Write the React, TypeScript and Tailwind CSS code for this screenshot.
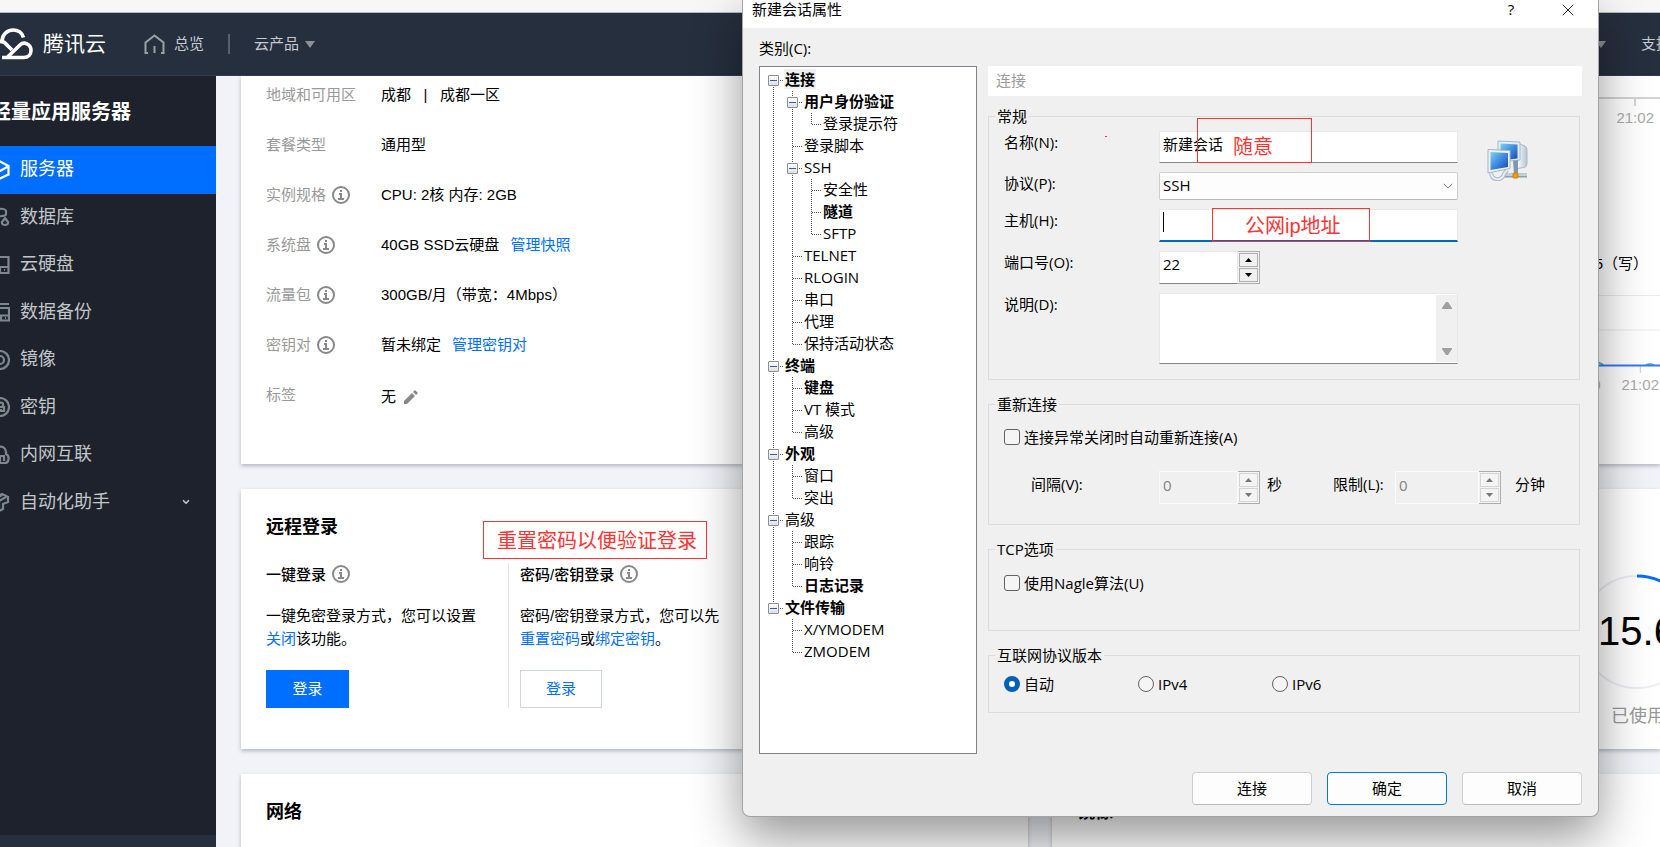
import type { ReactNode } from "react";
import { ChevronDown, X } from "lucide-react";

type TreeNode = { name: string; bold?: boolean; children?: TreeNode[] };

const categories: TreeNode[] = [
  {
    name: "连接",
    bold: true,
    children: [
      { name: "用户身份验证", bold: true, children: [{ name: "登录提示符" }] },
      { name: "登录脚本" },
      { name: "SSH", children: [{ name: "安全性" }, { name: "隧道", bold: true }, { name: "SFTP" }] },
      { name: "TELNET" },
      { name: "RLOGIN" },
      { name: "串口" },
      { name: "代理" },
      { name: "保持活动状态" },
    ],
  },
  { name: "终端", bold: true, children: [{ name: "键盘", bold: true }, { name: "VT 模式" }, { name: "高级" }] },
  { name: "外观", bold: true, children: [{ name: "窗口" }, { name: "突出" }] },
  { name: "高级", children: [{ name: "跟踪" }, { name: "响铃" }, { name: "日志记录", bold: true }] },
  { name: "文件传输", bold: true, children: [{ name: "X/YMODEM" }, { name: "ZMODEM" }] },
];

const navItems: { name: string; icon: ReactNode; active?: boolean; expandable?: boolean }[] = [
  { name: "服务器", active: true, icon: <path d="M10 1.5 18.5 6v8.500L10 18.500 1.500 14V6zM2 6.500l8 4.500 8-4.500" /> },
  { name: "数据库", icon: <path d="M2 4c0-3 14-3 14 0v3c0 3-14 3-14 0zm0 5c0 2 4 2.500 8 2M2 4v11c0 2 4 2.500 6 2.500M15 11l3 4c1 4-7 4-6 0z" /> },
  { name: "云硬盘", icon: <path d="M2 2h16.500v16H2zM2 12h16.500M10 12v6M14 15h1" /> },
  { name: "数据备份", icon: <path d="M4 2h15M2 6h17v12.500H2zM2 13.500h17M11 14v4M15 16h1" /> },
  { name: "镜像", icon: <><circle cx="10" cy="10" r="9" /><circle cx="10" cy="10" r="4" /></> },
  { name: "密钥", icon: <><circle cx="10" cy="10" r="9" /><path d="M9 14h5v-4h-5M13 10V7c0-2-4-2-4 0M11 12v1" /></> },
  { name: "内网互联", icon: <path d="M6 18c-6 0-6-8-1-8C4-1 17-1 16 9c4 2 3 9-1 9h-5v-8M10 11h4v5" /> },
  { name: "自动化助手", expandable: true, icon: <path d="m4 6 8-4 6 3v5l-5 2v5l-4 2V9zM9 9l7-4M12 3 5 7" /> },
];

function InfoIcon() {
  return (
    <svg className="ml-[6px] size-[18px] shrink-0" viewBox="0 0 18 18" fill="none" stroke="#888" strokeWidth="2">
      <circle cx="9" cy="9" r="8" />
      <path d="M9 4v2M7 8h2v5M6 13h6" />
    </svg>
  );
}

function CloudLogo() {
  return (
    <svg className="h-[32px] w-[38px]" viewBox="0 0 38 32" fill="none" stroke="#fff" strokeWidth="3.600">
      <path d="M2 14c3-1 7-1 10 3l5 5" />
      <path d="M7 13c0-6 5-11 11-11 5 0 9 2.500 10.500 7.500" />
      <path d="M12 29.500 25 17c4-4 11-1 11 5.500 0 4-3 7-7 7H7" />
    </svg>
  );
}

function TopBar() {
  return (
    <header className="flex h-[63px] shrink-0 items-center overflow-hidden whitespace-nowrap border-b border-[#323c54] bg-[#262f3e] text-[15px] text-[#c5c9d1]">
      <a href="#home" className="-ml-[5px] flex items-center gap-[10px] text-[21px] text-white">
        <CloudLogo />
        腾讯云
      </a>
      <a href="#overview" className="ml-[38px] flex items-center gap-[9px]">
        <svg className="h-[20px] w-[21px]" viewBox="0 0 21 20" fill="none" stroke="#98a3a8" strokeWidth="2">
          <path d="M4 19H1.500V8.500l9-7 9 7V19H17M10.500 12v7" />
        </svg>
        总览
      </a>
      <span className="ml-6 h-5 w-[2px] bg-[#59606b]" />
      <button className="ml-6 flex items-center gap-[6px]">
        云产品
        <Caret />
      </button>
      <span className="flex-1" />
      <Caret />
      <a href="#support" className="ml-[35px] w-[19px]">支持</a>
    </header>
  );
}

function Caret() {
  return (
    <svg className="h-[7px] w-[10px]" viewBox="0 0 10 7" fill="#8d9095">
      <path d="M0 0h10L5 7z" />
    </svg>
  );
}

function Sidebar() {
  return (
    <nav className="flex w-[216px] shrink-0 flex-col bg-[#1e222d]">
      <h2 className="-ml-[9px] flex h-[70px] items-center pt-[2px] text-[20px] font-bold text-white">轻量应用服务器</h2>
      <ul className="flex h-[380px] flex-col text-[18px] text-[#c1c6c8]">
        {navItems.map((item) => (
          <li key={item.name} className="flex flex-1">
            <a
              href={`#${item.name}`}
              className={`flex flex-1 items-center pr-[25px] ${item.active ? "bg-[#006eff] text-white" : ""}`}
            >
              <svg
                className={`-ml-[10px] mr-[10px] size-5 ${item.active ? "text-white" : "text-[#7c878e]"}`}
                viewBox="0 0 20 20"
                fill="none"
                stroke="currentColor"
                strokeWidth="2.200"
              >
                {item.icon}
              </svg>
              {item.name}
              {item.expandable && <ChevronDown className="ml-auto size-[10px]" strokeWidth={4} />}
            </a>
          </li>
        ))}
      </ul>
      <div className="mt-auto h-3 bg-[#262f3e]" />
    </nav>
  );
}

function Card({ className = "", children }: { className?: string; children?: ReactNode }) {
  return <section className={`bg-white shadow-[0_2px_4px_rgba(54,58,80,0.32)] ${className}`}>{children}</section>;
}

function SpecRow({ label, info, children }: { label: string; info?: boolean; children: ReactNode }) {
  return (
    <div className="flex h-5 items-center">
      <dt className="flex w-[115px] items-center text-[#999]">
        {label}
        {info && <InfoIcon />}
      </dt>
      <dd className="flex items-center gap-[11px] whitespace-pre">{children}</dd>
    </div>
  );
}

function Link({ children }: { children: string }) {
  return <a href={`#${children}`} className="text-[#006eff]">{children}</a>;
}

function SpecCard() {
  return (
    <Card className="pl-[25px] pt-[9px] pb-[59px]">
      <dl className="flex flex-col gap-[30px]">
        <SpecRow label="地域和可用区">成都   |   成都一区</SpecRow>
        <SpecRow label="套餐类型">通用型</SpecRow>
        <SpecRow label="实例规格" info>CPU: 2核 内存: 2GB</SpecRow>
        <SpecRow label="系统盘" info>40GB SSD云硬盘<Link>管理快照</Link></SpecRow>
        <SpecRow label="流量包" info>300GB/月（带宽：4Mbps）</SpecRow>
        <SpecRow label="密钥对" info>暂未绑定<Link>管理密钥对</Link></SpecRow>
        <SpecRow label="标签">
          <span className="flex items-center gap-2 pt-1">
            无
            <svg className="size-[14px]" viewBox="0 0 14 14" fill="#888">
              <path d="M0 14v-3l8-8 3 3-8 8zM9 2l2-2 3 3-2 2z" />
            </svg>
          </span>
        </SpecRow>
      </dl>
    </Card>
  );
}

function LoginCard() {
  return (
    <Card className="px-[25px] pt-[25px] pb-[41px]">
      <h3 className="text-[18px] leading-[26px] font-bold">远程登录</h3>
      <div className="mt-[23px] flex leading-[23px]">
        <div className="w-[243px] border-r border-[#e5e7ed] pr-[30px]">
          <h4 className="flex h-[22px] items-center font-medium">一键登录<InfoIcon /></h4>
          <p className="mt-[19px]">一键免密登录方式，您可以设置<Link>关闭</Link>该功能。</p>
          <button className="mt-5 h-[38px] w-[83px] bg-[#006eff] pb-[2px] text-white">登录</button>
        </div>
        <div className="w-[215px] pl-[11px]">
          <h4 className="flex h-[22px] items-center font-medium">密码/密钥登录<InfoIcon /></h4>
          <p className="mt-[19px]">密码/密钥登录方式，您可以先<Link>重置密码</Link>或<Link>绑定密钥</Link>。</p>
          <button className="mt-5 h-[38px] w-[82px] border border-[#cfd5de] pb-[2px] text-[#006eff]">登录</button>
        </div>
      </div>
    </Card>
  );
}

function MonitorCard() {
  return (
    <Card className="flex flex-col items-end overflow-hidden pt-[21px] text-[15px]">
      <svg className="h-[9px] w-full" preserveAspectRatio="xMaxYMin slice" viewBox="0 0 600 9" shapeRendering="crispEdges">
        <path d="M0 1h600M575.500 1v8" stroke="#d4d4d4" strokeWidth="2" />
      </svg>
      <span className="mr-[6px] mt-[2px] leading-5 text-[#aaa]">21:02</span>
      <span className="mr-[12px] mt-[126px] leading-5">0.05（写）</span>
      <svg className="mt-5 h-[79px] w-full" preserveAspectRatio="xMaxYMin slice" viewBox="0 0 600 79" fill="none">
        <path d="M0 1.500h600M0 35.500h600" stroke="#eaeaea" />
        <path d="M580.500 71v8" stroke="#ccc" />
        <path d="M0 70h532l6-3 6 3M586 70l4-1 4 1" stroke="#4fc08d" strokeWidth="2" />
        <path d="M0 70.500h600" stroke="#3377ff" strokeWidth="2" />
      </svg>
      <span className="mr-[1px] mt-[2px] whitespace-pre leading-5 text-[#aaa]">21:00     21:02</span>
    </Card>
  );
}

function TrafficCard() {
  return (
    <Card className="flex flex-col items-end overflow-hidden pt-[84px]">
      <div className="relative -mr-[36px] grid size-[118px] place-items-center">
        <svg className="absolute inset-0" viewBox="0 0 118 118" fill="none">
          <circle cx="59" cy="59" r="56" stroke="#ebedf2" strokeWidth="2" />
          <path d="M59 3a56 56 0 0 1 53 38" stroke="#006eff" strokeWidth="3" />
        </svg>
        <span className="pb-[2px] text-[40px] leading-none">15.6</span>
      </div>
      <span className="-mr-[23px] mt-3 text-[18px] leading-[26px] text-[#999]">已使用量</span>
    </Card>
  );
}

function TreeRow({ node, guides, first, last }: { node: TreeNode; guides: boolean[]; first: boolean; last: boolean }) {
  const root = guides.length === 0;
  return (
    <li role="treeitem" aria-expanded={node.children ? true : undefined} aria-selected={root && first}>
      <div className="flex h-[22px] items-start">
        {guides.map((open, i) => (
          <svg key={i} className="h-[22px] w-[19px]" viewBox="0 0 19 22" stroke="#555" strokeDasharray="1 1">
            {open && <path d="M9.500 0v22" />}
          </svg>
        ))}
        <span className="relative">
          <svg className="h-[22px] w-[20px]" viewBox="0 0 20 22" stroke="#555" strokeDasharray="1 1">
            {!(root && first) && <path d="M9.500 0v11" />}
            {!last && <path d="M9.500 12v10" />}
            <path d="M10 11.500h9" />
          </svg>
          {node.children && (
            <button
              aria-label={`折叠 ${node.name}`}
              className="absolute left-1 top-[6px] grid size-[11px] place-items-center rounded-[1px] border border-[#8f8f8f] bg-linear-to-b from-white to-[#e0e0e0]"
            >
              <span className="h-px w-[7px] bg-[#3b57b5]" />
            </button>
          )}
        </span>
        <span
          className={`px-px leading-[20px] ${node.bold ? "font-bold" : ""} ${root && first ? "bg-[#f0f0f0]" : ""}`}
        >
          {node.name}
        </span>
      </div>
      {node.children && (
        <ul role="group">
          {node.children.map((child, i) => (
            <TreeRow
              key={child.name}
              node={child}
              guides={[...guides, !last]}
              first={i === 0}
              last={i === node.children!.length - 1}
            />
          ))}
        </ul>
      )}
    </li>
  );
}

function Group({ title, className, children }: { title: string; className: string; children: ReactNode }) {
  return (
    <fieldset className={`mr-[2px] border border-[#dcdcdc] pl-[15px] ${className}`}>
      <legend className="-ml-[9px] px-[2px] leading-5">{title}</legend>
      {children}
    </fieldset>
  );
}

function Field({ id, label, children }: { id: string; label: string; children: ReactNode }) {
  return (
    <div className="flex items-start">
      <label htmlFor={id} className="w-[155px] leading-[22px]">{label}</label>
      {children}
    </div>
  );
}

function Spinner({ id, value, disabled, className }: { id: string; value: string; disabled?: boolean; className: string }) {
  const step = `grid flex-1 place-items-center border ${disabled ? "border-[#d5d5d5] text-[#777]" : "border-[#adadad] bg-[#f0f0f0] text-black"}`;
  return (
    <div className={`flex h-[33px] ${className}`}>
      <input
        id={id}
        defaultValue={value}
        disabled={disabled}
        className={`min-w-0 flex-1 border pb-[6px] pl-[3px] outline-none ${disabled ? "border-[#fafafa] bg-[#f0f0f0] text-[#838383]" : "border-[#e8e8e8] border-b-[#868686] bg-white"}`}
      />
      <div className="flex w-[22px] flex-col gap-px border border-l-0 border-[#adadad] bg-[#f4f4f4] p-px">
        <button aria-label="增加" disabled={disabled} className={step}>
          <svg className="h-1 w-[7px]" viewBox="0 0 7 4" fill="currentColor"><path d="M0 4h7L3.500 0z" /></svg>
        </button>
        <button aria-label="减少" disabled={disabled} className={step}>
          <svg className="h-1 w-[7px]" viewBox="0 0 7 4" fill="currentColor"><path d="M0 0h7L3.500 4z" /></svg>
        </button>
      </div>
    </div>
  );
}

function CheckOption({ label }: { label: string }) {
  return (
    <label className="flex h-5 items-center gap-1">
      <input type="checkbox" className="size-4 appearance-none rounded-[3px] border border-[#626262] bg-[#f5f5f5]" />
      {label}
    </label>
  );
}

function NetworkIcon() {
  return (
    <svg className="ml-[29px] mt-[9px] size-[41px] shrink-0" viewBox="0 0 41 41">
      <defs>
        <linearGradient id="screen" x1="0" y1="0" x2="1" y2="1">
          <stop offset="0" stopColor="#7ad4f5" />
          <stop offset="0.500" stopColor="#3f8be0" />
          <stop offset="1" stopColor="#1a43b0" />
        </linearGradient>
        <linearGradient id="tower" x1="0" x2="1">
          <stop offset="0" stopColor="#fff" />
          <stop offset="1" stopColor="#b3c4d2" />
        </linearGradient>
      </defs>
      <path d="M32 4l5 1.500q3 1 3 4V24q0 3-3 3.500l-7 1z" fill="url(#tower)" stroke="#a9bac8" />
      <path d="M11 1l22 1v18l-22 2z" fill="#e6edf2" stroke="#aabac6" />
      <path d="M13.500 3.500l17 1v14l-17 2z" fill="url(#screen)" />
      <path d="M26 21l5-1v14h-4z" fill="#7e99ad" />
      <path d="M16 35.500h24" stroke="#8ba0ae" strokeWidth="4" />
      <path d="M16 35h24" stroke="#d7e1e7" strokeWidth="1.500" />
      <path d="M4 33c1 8 11 8 13 1l3-4" fill="none" stroke="#aabbc8" strokeWidth="4" />
      <path d="M4 33c1 8 11 8 13 1l3-4" fill="none" stroke="#e8eff3" strokeWidth="2" />
      <path d="M1 9.500l22 1v18L1 33z" fill="#eef3f6" stroke="#a2b4c1" />
      <path d="M3.500 12l17.500 1v14l-17.500 3z" fill="url(#screen)" />
      <rect x="26" y="33" width="5" height="5" rx="1" fill="#f79a0c" stroke="#d77d00" />
    </svg>
  );
}

function SessionDialog() {
  return (
    <div
      role="dialog"
      aria-label="新建会话属性"
      className="absolute left-[742px] top-0 flex w-[857px] flex-col rounded-b-lg border border-t-0 border-[#a3a3a3] bg-[#f0f0f0] font-['Open_Sans','Noto_Sans_CJK_SC',sans-serif] text-black shadow-[0_20px_50px_rgba(0,0,0,0.42)]"
    >
      <div className="flex h-7 items-start bg-white pl-[9px]">
        <h1 className="leading-[18px]">新建会话属性</h1>
        <button aria-label="帮助" className="ml-auto w-4 leading-[18px]">?</button>
        <button aria-label="关闭" className="ml-[39px] mr-5">
          <X className="size-5" strokeWidth={1} />
        </button>
      </div>
      <div className="px-4 pt-[11px] pb-[11px]">
        <p className="leading-[18px]">类别(C):</p>
        <div className="mt-[9px] flex gap-[11px]">
          <ul role="tree" aria-label="类别" className="min-h-[688px] w-[218px] border border-[#82828c] bg-white pl-[4px] pt-[2px]">
            {categories.map((node, i) => (
              <TreeRow key={node.name} node={node} guides={[]} first={i === 0} last={i === categories.length - 1} />
            ))}
          </ul>
          <form className="flex flex-1 flex-col gap-[14px]" onSubmit={(e) => e.preventDefault()}>
            <h2 className="-mb-1 h-[30px] bg-white pl-2 leading-[28px] text-[#9a9a9a]">连接</h2>
            <Group title="常规" className="pt-[5px] pb-[15px]">
              <div className="flex items-start">
                <div className="flex flex-col gap-[9px]">
                  <Field id="name" label="名称(N):">
                    <input id="name" defaultValue="新建会话" className="h-[32px] w-[299px] border border-[#e8e8e8] border-b-[#868686] bg-white pb-2 pl-[3px] outline-none" />
                  </Field>
                  <Field id="protocol" label="协议(P):">
                    <div className="relative h-[28px] w-[299px]">
                      <select id="protocol" className="size-full appearance-none rounded-[2px] border border-[#cfcfcf] border-b-[#b5b5b5] bg-[#fdfdfd] pb-[2px] pl-[3px] outline-none">
                        <option>SSH</option>
                      </select>
                      <ChevronDown className="pointer-events-none absolute right-[2px] top-[6px] size-4 text-[#444]" strokeWidth={1} />
                    </div>
                  </Field>
                  <Field id="host" label="主机(H):">
                    <div className="flex h-[33px] w-[299px] items-start border border-b-2 border-[#e8e8e8] border-b-[#0067c0] bg-white pl-[3px] pt-[2px]">
                      <span className="h-5 w-px bg-black" />
                      <input id="host" className="flex-1 bg-transparent outline-none" />
                    </div>
                  </Field>
                  <Field id="port" label="端口号(O):">
                    <Spinner id="port" value="22" className="w-[101px]" />
                  </Field>
                  <Field id="note" label="说明(D):">
                    <div className="flex h-[71px] w-[299px] border border-[#e8e8e8] border-b-[#868686] bg-white">
                      <textarea id="note" className="min-w-0 flex-1 resize-none outline-none" />
                      <div className="my-px flex w-[21px] flex-col items-center justify-between bg-[#f0f0f0] py-[7px]">
                        <svg className="h-[7px] w-[10px]" viewBox="0 0 10 7" fill="#a0a0a0"><path d="M0 7V6l4-6h2l4 6v1z" /></svg>
                        <svg className="h-[7px] w-[10px]" viewBox="0 0 10 7" fill="#a0a0a0"><path d="M0 0v1l4 6h2l4-6V0z" /></svg>
                      </div>
                    </div>
                  </Field>
                </div>
                <NetworkIcon />
              </div>
            </Group>
            <Group title="重新连接" className="pt-[13px] pb-5">
              <CheckOption label="连接异常关闭时自动重新连接(A)" />
              <div className="mt-6 flex leading-[26px]">
                <label htmlFor="interval" className="ml-[27px] w-[128px]">间隔(V):</label>
                <Spinner id="interval" value="0" disabled className="w-[101px]" />
                <span className="ml-[7px] w-[66px]">秒</span>
                <label htmlFor="limit" className="w-[62px]">限制(L):</label>
                <Spinner id="limit" value="0" disabled className="w-[106px]" />
                <span className="ml-[14px]">分钟</span>
              </div>
            </Group>
            <Group title="TCP选项" className="pt-[14px] pb-[37px]">
              <CheckOption label="使用Nagle算法(U)" />
            </Group>
            <Group title="互联网协议版本" className="pt-[9px] pb-[18px]">
              <div className="flex">
                {["自动", "IPv4", "IPv6"].map((version, i) => (
                  <label key={version} className="flex h-5 w-[134px] items-center gap-1">
                    <input
                      type="radio"
                      name="ip"
                      defaultChecked={i === 0}
                      className="size-4 appearance-none rounded-full border border-[#626262] bg-[#f5f5f5] checked:border-[5px] checked:border-[#005fb8] checked:bg-white"
                    />
                    {version}
                  </label>
                ))}
              </div>
            </Group>
          </form>
        </div>
        <div className="mt-[18px] flex justify-end gap-[15px]">
          {["连接", "确定", "取消"].map((action) => (
            <button
              key={action}
              className={`h-[33px] w-[120px] rounded-[4px] border bg-[#fdfdfd] ${action === "确定" ? "border-[#0078d4]" : "border-[#d0d0d0] border-b-[#bbb]"}`}
            >
              {action}
            </button>
          ))}
        </div>
      </div>
    </div>
  );
}

function Note({ className, children }: { className: string; children: string }) {
  return (
    <div className={`pointer-events-none absolute flex items-center border border-[#fa3434] text-[20px] text-[#fa3434] ${className}`}>
      {children}
    </div>
  );
}

export default function App() {
  return (
    <div className="relative flex h-screen flex-col overflow-hidden bg-[#f2f3f8] font-['Liberation_Sans','Noto_Sans_CJK_SC',sans-serif] text-[15px] text-black">
      <div className="h-[13px] shrink-0 border-b border-[#b9b9b9] bg-[#f7f7f7]" />
      <TopBar />
      <div className="flex min-h-0 flex-1">
        <Sidebar />
        <main className="grid min-w-0 flex-1 grid-cols-[22fr_17fr] content-start gap-x-6 gap-y-[25px] pl-[25px]">
          <SpecCard />
          <MonitorCard />
          <LoginCard />
          <TrafficCard />
          <Card className="px-[25px] pt-[25px] pb-[60px]">
            <h3 className="text-[18px] leading-[26px] font-bold">网络</h3>
          </Card>
          <Card className="px-[25px] pt-[25px] pb-[60px]">
            <h3 className="text-[18px] leading-[26px] font-bold">镜像</h3>
          </Card>
        </main>
      </div>
      <SessionDialog />
      <Note className="left-[483px] top-[521px] h-[38px] w-[224px] pl-[13px] pt-[2px]">重置密码以便验证登录</Note>
      <Note className="left-[1197px] top-[118px] h-[45px] w-[115px] pl-[35px] pt-3">随意</Note>
      <Note className="left-[1212px] top-[208px] h-[34px] w-[158px] pl-[32px] pt-[2px]">公网ip地址</Note>
      <span className="absolute left-[1105px] top-[136px] h-px w-[2px] bg-[#fa3434]" />
    </div>
  );
}
